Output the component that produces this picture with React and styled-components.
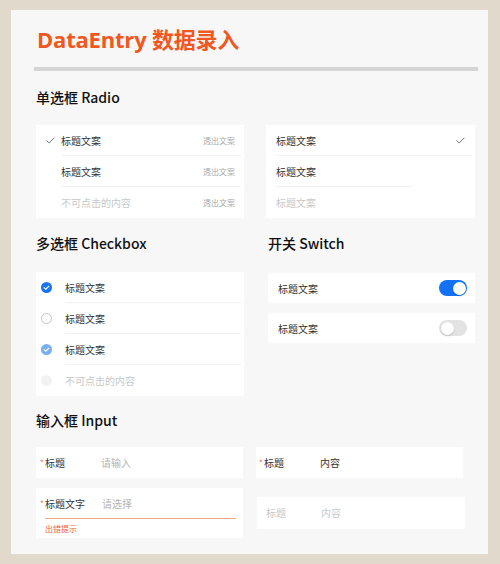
import React from 'react'
import styled, {createGlobalStyle} from 'styled-components'

const GlobalStyle = createGlobalStyle`
  html, body {
    margin: 0;
    padding: 0;
    background: #e2d9cd;
  }
  body {
    font-family: 'Noto Sans CJK SC', 'Noto Sans', sans-serif;
    -webkit-font-smoothing: antialiased;
  }
`

const Sheet = styled.div`
  margin: 10px 12px 12px 11px;
  background: #f7f7f7;
  padding: 14px 10px 16px 25px;
  box-sizing: border-box;
`

const Title = styled.h1`
  margin: 0 0 0 1px;
  font-family: 'Open Sans', 'Noto Sans CJK SC', sans-serif;
  font-weight: 700;
  font-size: 22px;
  line-height: 30px;
  color: #f2571f;
  letter-spacing: -0.2px;
`

const Bar = styled.div`
  margin: 13px 0 0 -2px;
  height: 4px;
  background: #d5d5d5;
`

const Heading = styled.h2`
  margin: ${p => p.$top || 0}px 0 0 ${p => p.$left || 0}px;
  font-family: 'Noto Sans CJK SC', 'Noto Sans', sans-serif;
  font-weight: 500;
  font-size: 14px;
  line-height: 20px;
  color: #111;
`

const Columns = styled.div`
  display: grid;
  grid-template-columns: ${p => p.$cols || '208px 209px'};
  column-gap: ${p => p.$gap || 22}px;
  align-items: start;
  margin-top: ${p => p.$top || 0}px;
`

const Column = styled.div`
  display: flex;
  flex-direction: column;
  gap: ${p => p.$gap || 0}px;
  margin-left: ${p => p.$shift || 0}px;
  margin-top: ${p => p.$top || 0}px;
`

const Panel = styled.div`
  background: #fff;
  margin-top: ${p => p.$top || 0}px;
  margin-left: ${p => p.$shift || 0}px;
`

const ListRow = styled.div`
  display: flex;
  align-items: center;
  height: 31px;
  padding-left: ${p => p.$pad}px;
`

const Mark = styled.div`
  width: ${p => p.$w}px;
  flex: none;
  display: flex;
  align-items: center;
`

const RowBody = styled.div`
  flex: 1;
  align-self: stretch;
  display: flex;
  align-items: center;
  justify-content: space-between;
  margin-right: ${p => p.$end || 3}px;
  padding-right: ${p => p.$inner || 0}px;
  border-bottom: 1px solid ${p => (p.$line ? '#f1f1f1' : 'transparent')};
  ${p => p.$lineWidth && `max-width: ${p.$lineWidth}px;`}
`

const Label = styled.span`
  font-size: 10px;
  color: ${p => (p.$off ? '#c8c8c8' : '#333')};
`

const Extra = styled.span`
  font-size: 8px;
  color: #a9a9a9;
`

const Tick = () => (
  <svg width="9" height="7" viewBox="0 0 9 7">
    <path d="M0.6 3.6 L3.2 6 L8.4 0.7" fill="none" stroke="#666" strokeWidth="0.9" />
  </svg>
)

const Dot = styled.span`
  width: 11px;
  height: 11px;
  border-radius: 50%;
  box-sizing: border-box;
  display: flex;
  align-items: center;
  justify-content: center;
  background: ${p => ({on: '#1a73f0', soft: '#79aef3', off: '#fff', none: '#f2f2f2'}[p.$kind])};
  border: ${p => (p.$kind === 'off' ? '1px solid #c4c4c4' : 'none')};
`

const DotTick = () => (
  <svg width="7" height="5" viewBox="0 0 7 5">
    <path d="M0.8 2.4 L2.8 4.2 L6.2 0.8" fill="none" stroke="#fff" strokeWidth="1.2" />
  </svg>
)

const SwitchRow = styled.div`
  background: #fff;
  height: 30px;
  display: flex;
  align-items: center;
  justify-content: space-between;
  padding: 0 8px 0 10px;
`

const Toggle = styled.span`
  width: 28px;
  height: 16px;
  border-radius: 8px;
  background: ${p => (p.$on ? '#1272f5' : '#e3e3e3')};
  display: flex;
  align-items: center;
  justify-content: ${p => (p.$on ? 'flex-end' : 'flex-start')};
  padding: 0 1.5px;
  box-sizing: border-box;

  &::after {
    content: '';
    width: 13px;
    height: 13px;
    border-radius: 50%;
    background: #fff;
    box-shadow: 0 1px 2px rgba(0, 0, 0, 0.18);
  }
`

const Field = styled.div`
  background: #fff;
  margin-top: ${p => p.$top || 0}px;
  margin-left: ${p => p.$shift || 0}px;
  width: ${p => p.$w || 207}px;
  padding: 0 7px 0 ${p => p.$pad || 4}px;
  box-sizing: border-box;
`

const FieldLine = styled.div`
  display: flex;
  align-items: center;
  height: ${p => p.$h || 30}px;
  border-bottom: 1px solid ${p => (p.$error ? '#f2a488' : 'transparent')};
  margin-left: ${p => (p.$error ? 5 : 0)}px;
`

const Star = styled.span`
  width: 5px;
  flex: none;
  font-size: 8px;
  color: #ef5a2f;
  margin-left: ${p => (p.$error ? -5 : 0)}px;
`

const FieldName = styled.span`
  width: ${p => p.$w}px;
  flex: none;
  font-size: 10px;
  color: ${p => (p.$off ? '#c9c9c9' : '#333')};
`

const FieldValue = styled.span`
  font-size: 10px;
  color: ${p => (p.$tone === 'value' ? '#333' : p.$tone === 'off' ? '#cacaca' : '#b4b4b4')};
`

const Hint = styled.div`
  font-size: 8px;
  color: #ee6338;
  line-height: 19px;
  padding-left: 5px;
`

const radioLeft = [
  {text: '标题文案', checked: true},
  {text: '标题文案'},
  {text: '不可点击的内容', off: true},
]

const radioRight = [
  {text: '标题文案', checked: true},
  {text: '标题文案', short: true},
  {text: '标题文案', off: true},
]

const checks = [
  {kind: 'on', text: '标题文案'},
  {kind: 'off', text: '标题文案'},
  {kind: 'soft', text: '标题文案'},
  {kind: 'none', text: '不可点击的内容'},
]

export default function App() {
  return (
    <>
      <GlobalStyle />
      <Sheet>
        <Title>DataEntry 数据录入</Title>
        <Bar />

        <Heading $top={16}>单选框 Radio</Heading>
        <Columns $top={18}>
          <Panel>
            {radioLeft.map((r, i) => (
              <ListRow key={i} $pad={10}>
                <Mark $w={15}>{r.checked && <Tick />}</Mark>
                <RowBody $line={i < 2} $end={3} $inner={6}>
                  <Label $off={r.off}>{r.text}</Label>
                  <Extra>透出文案</Extra>
                </RowBody>
              </ListRow>
            ))}
          </Panel>
          <Panel>
            {radioRight.map((r, i) => (
              <ListRow key={i} $pad={10}>
                <RowBody $line={i < 2} $end={3} $inner={7} $lineWidth={r.short ? 130 : 0}>
                  <Label $off={r.off}>{r.text}</Label>
                  {r.checked && <Tick />}
                </RowBody>
              </ListRow>
            ))}
          </Panel>
        </Columns>

        <Columns $top={15}>
          <div>
            <Heading>多选框 Checkbox</Heading>
            <Panel $top={19}>
              {checks.map((c, i) => (
                <ListRow key={i} $pad={5}>
                  <Mark $w={24}>
                    <Dot $kind={c.kind}>{(c.kind === 'on' || c.kind === 'soft') && <DotTick />}</Dot>
                  </Mark>
                  <RowBody $line={i < 3} $end={3}>
                    <Label $off={c.kind === 'none'}>{c.text}</Label>
                  </RowBody>
                </ListRow>
              ))}
            </Panel>
          </div>
          <div>
            <Heading $left={2}>开关 Switch</Heading>
            <Column $gap={10} $shift={2} $top={20}>
              <SwitchRow>
                <Label>标题文案</Label>
                <Toggle $on />
              </SwitchRow>
              <SwitchRow>
                <Label>标题文案</Label>
                <Toggle />
              </SwitchRow>
            </Column>
          </div>
        </Columns>

        <Heading $top={14}>输入框 Input</Heading>
        <Columns $cols="207px 209px" $gap={13} $top={17}>
          <Column>
            <Field>
              <FieldLine>
                <Star>*</Star>
                <FieldName $w={56}>标题</FieldName>
                <FieldValue>请输入</FieldValue>
              </FieldLine>
            </Field>
            <Field $top={10}>
              <FieldLine $h={30} $error>
                <Star $error>*</Star>
                <FieldName $w={57}>标题文字</FieldName>
                <FieldValue>请选择</FieldValue>
              </FieldLine>
              <Hint>出错提示</Hint>
            </Field>
          </Column>
          <Column>
            <Field $pad={3}>
              <FieldLine>
                <Star>*</Star>
                <FieldName $w={56}>标题</FieldName>
                <FieldValue $tone="value">内容</FieldValue>
              </FieldLine>
            </Field>
            <Field $top={19} $shift={1} $w={208} $pad={9}>
              <FieldLine $h={31}>
                <FieldName $w={55} $off>标题</FieldName>
                <FieldValue $tone="off">内容</FieldValue>
              </FieldLine>
            </Field>
          </Column>
        </Columns>
      </Sheet>
    </>
  )
}
